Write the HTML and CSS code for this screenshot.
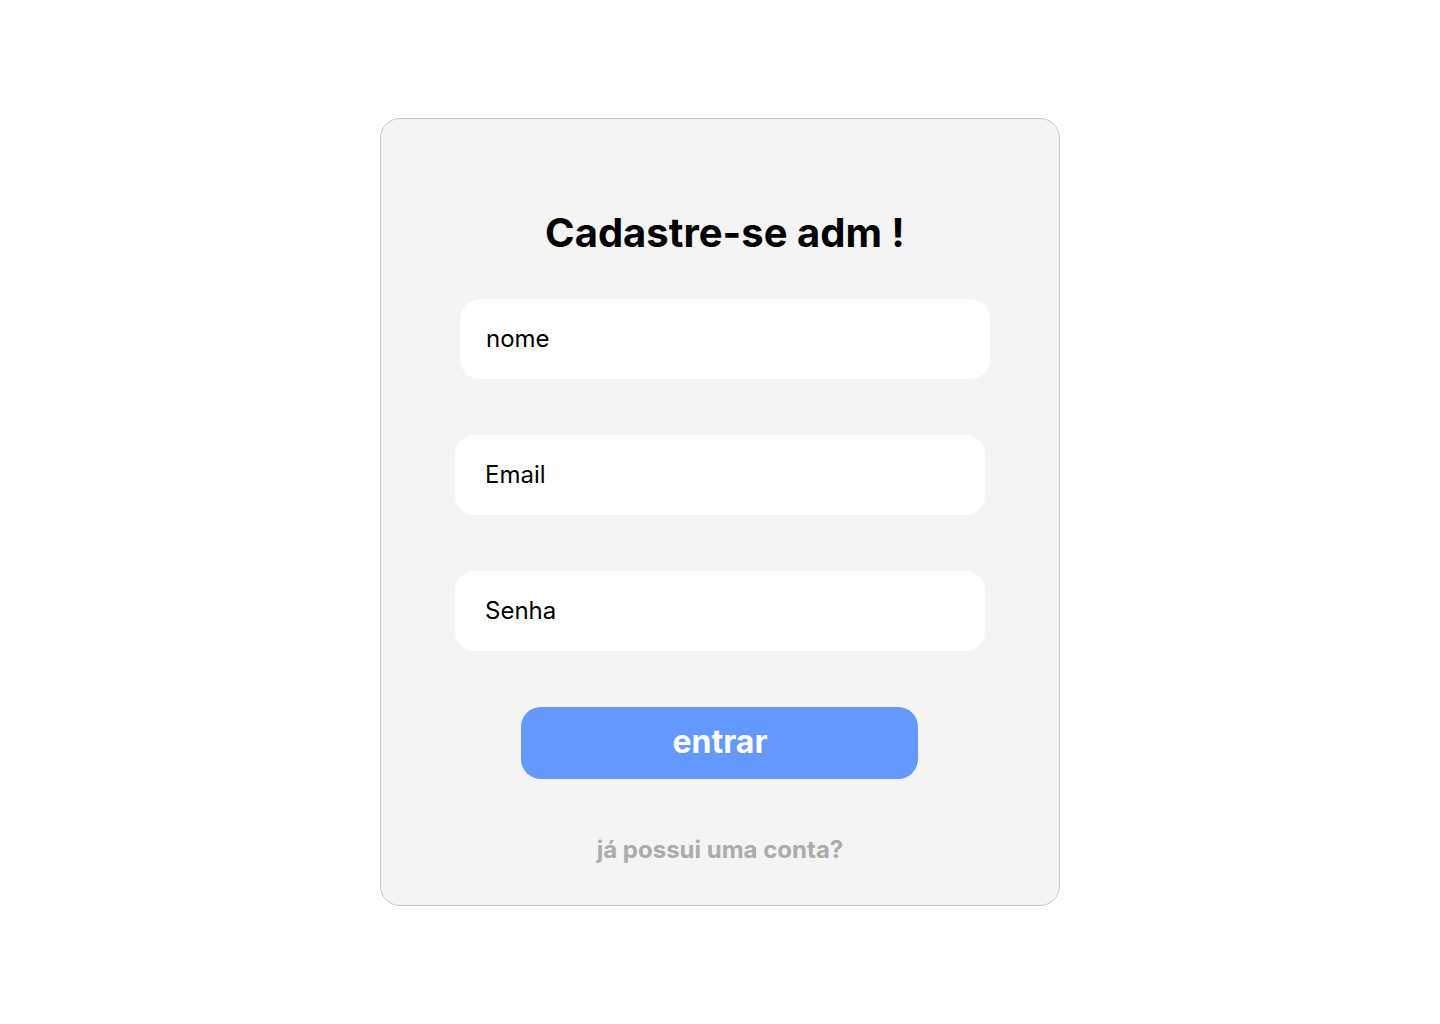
FILE: index.html
```html
<!DOCTYPE html>
<html lang="pt">
<head>
<meta charset="utf-8">
<title>Cadastre-se adm</title>
<link rel="stylesheet" href="styles.css">
</head>
<body>
<main class="page">
  <form class="card">
    <h1 class="title">Cadastre-se adm !</h1>
    <div class="field field-first">nome</div>
    <div class="field">Email</div>
    <div class="field">Senha</div>
    <button type="button" class="btn">entrar</button>
    <a class="link" href="#">já possui uma conta?</a>
  </form>
</main>
</body>
</html>
```

FILE: styles.css
```css
* { box-sizing: border-box; }
html, body { margin: 0; padding: 0; background: #ffffff; }
body { font-family: Inter, "Noto Sans", sans-serif; color: #000; }
.page {
  display: flex;
  justify-content: center;
  padding-top: 118px;
}
.card {
  width: 680px;
  height: 788px;
  background: #f4f4f4;
  border: 1px solid #c6c6c6;
  border-radius: 20px;
  display: flex;
  flex-direction: column;
  align-items: center;
  padding-top: 90px;
}
.title {
  margin: 0 0 42px 10px;
  font-size: 40px;
  line-height: 48px;
  font-weight: 700;
}
.field {
  width: 530px;
  height: 80px;
  background: #ffffff;
  border-radius: 20px;
  display: flex;
  align-items: center;
  padding-left: 30px;
  padding-bottom: 1px;
  font-size: 24px;
  margin-bottom: 56px;
}
.field-first {
  margin-left: 10px;
  padding-left: 26px;
  padding-bottom: 2px;
}
.btn {
  width: 397px;
  height: 72px;
  border: none;
  border-radius: 20px;
  background: #6399fe;
  color: #ffffff;
  font-family: Inter, "Noto Sans", sans-serif;
  font-size: 32px;
  font-weight: 700;
  margin: 0 2px 56px 0;
  padding: 0 0 4px 2px;
}
.link {
  font-size: 24px;
  line-height: 29px;
  font-weight: 700;
  color: #ababab;
  text-decoration: none;
}
```
